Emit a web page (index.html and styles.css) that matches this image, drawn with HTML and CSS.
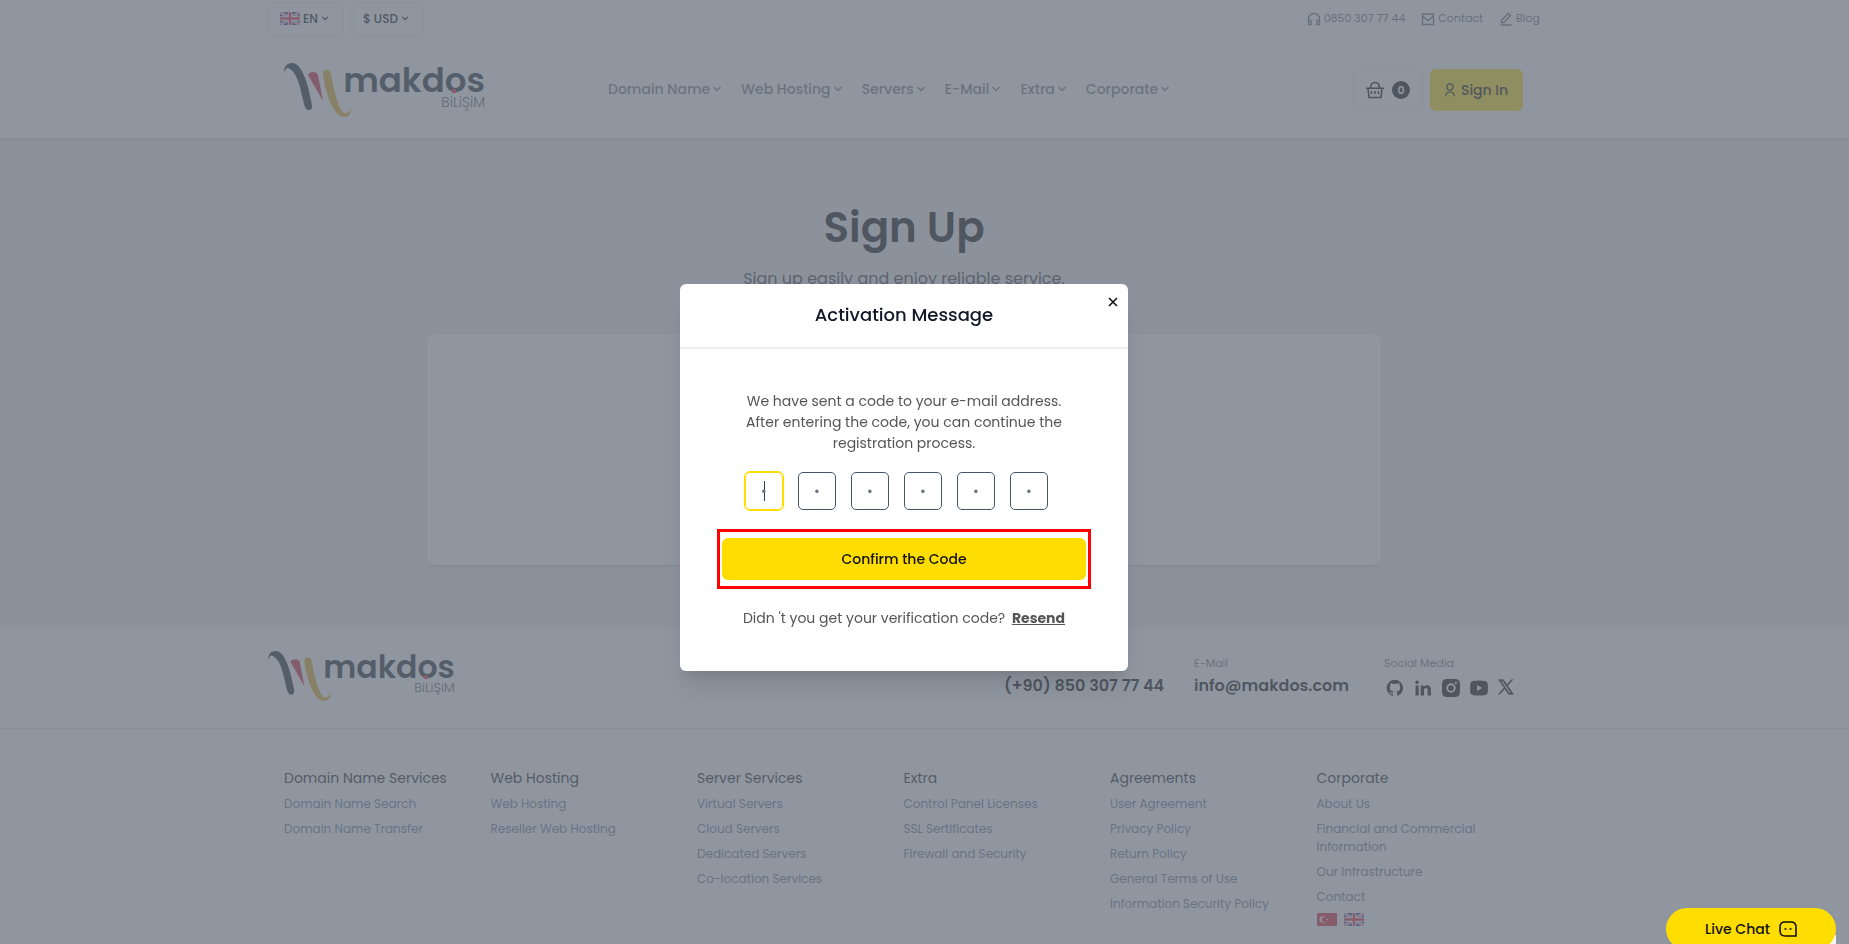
FILE: index.html
```html
<!DOCTYPE html>
<html lang="en">
<head>
    <meta charset="UTF-8">
    <meta name="viewport" content="width=device-width, initial-scale=1.0">
    <title>Sign Up - Makdos</title>
    <link rel="stylesheet" href="styles.css">
</head>
<body>
    <!-- Shared icons -->
    <svg class="sprite" aria-hidden="true">
        <symbol id="chevron" viewBox="0 0 10 6">
            <path d="M1.500 1l3.500 3.500L8.500 1" fill="none" stroke="currentColor" stroke-width="1.500"/>
        </symbol>
        <symbol id="flag-uk" viewBox="0 0 20 13">
            <rect width="20" height="13" rx="1" fill="#1c2f86"/>
            <path d="M0 0l20 13M20 0L0 13" stroke="#fff" stroke-width="3"/>
            <path d="M0 0l20 13M20 0L0 13" stroke="#e02040" stroke-width="1"/>
            <path d="M10 0v13M0 6.500h20" stroke="#fff" stroke-width="4.500"/>
            <path d="M10 0v13M0 6.500h20" stroke="#e02040" stroke-width="2.500"/>
        </symbol>
        <symbol id="flag-tr" viewBox="0 0 20 13">
            <rect width="20" height="13" rx="1" fill="#e01a28"/>
            <circle cx="6" cy="6.500" r="3.300" fill="#fff"/>
            <circle cx="7" cy="6.500" r="2.600" fill="#e01a28"/>
            <path d="M9 6.500l3-1-1.500 1 1.500 1z" fill="#fff"/>
        </symbol>
        <symbol id="logo" viewBox="0 0 201 56" overflow="visible">
            <path d="M0 11C0 4 3 1 8 1c8 0 13 13 16 24l4 18c1 6-5 7-7 2C17 32 15 10 4 6 2 6 1 8 0 11z" fill="#14222e"/>
            <path d="M24 13c1-4 9-4 10 0l5 26z" fill="#d21f32"/>
            <path d="M39 11c1-5 7-4 8 1 4 23 9 38 14 39 3 1 5-2 6-6 1 6-2 10-7 10C50 55 41 32 39 11z" fill="#e8ac1c"/>
            <text class="logo-name" x="201" y="30" text-anchor="end">makdos</text>
            <text class="logo-sub" x="201" y="45" text-anchor="end">BiLiŞiM</text>
            <path d="M168 27h4v4h-4z" fill="#e02030"/>
        </symbol>
    </svg>

    <header class="header">
        <div class="topbar">
            <div class="container topbar-inner">
                <button class="picker" type="button">
                    <svg class="flag"><use href="#flag-uk"/></svg>
                    EN
                    <svg class="chevron"><use href="#chevron"/></svg>
                </button>
                <button class="picker" type="button">
                    $ USD
                    <svg class="chevron"><use href="#chevron"/></svg>
                </button>
                <div class="top-links">
                    <a href="#">
                        <svg viewBox="0 0 14 14" fill="none" stroke="currentColor" stroke-width="1.400"><path d="M1.500 12V7a5.500 5.500 0 0 1 11 0v5M1.500 8.500H4v4H1.500zM12.500 8.500H10v4h2.500z"/></svg>
                        0850 307 77 44
                    </a>
                    <a href="#">
                        <svg viewBox="0 0 14 14" fill="none" stroke="currentColor" stroke-width="1.400"><path d="M1.500 2h11v10.500h-11zM1.500 4L7 8.500 12.500 4"/></svg>
                        Contact
                    </a>
                    <a href="#">
                        <svg viewBox="0 0 14 14" fill="none" stroke="currentColor" stroke-width="1.400"><path d="M2.500 10.500v-2.500L9.500 1.500 11.500 3.500 5 10.500zM1.500 13h11"/></svg>
                        Blog
                    </a>
                </div>
            </div>
        </div>
        <div class="container header-inner">
            <a href="#" aria-label="Makdos"><svg class="logo"><use href="#logo"/></svg></a>
            <nav class="nav">
                <a href="#">Domain Name <svg class="chevron"><use href="#chevron"/></svg></a>
                <a href="#">Web Hosting <svg class="chevron"><use href="#chevron"/></svg></a>
                <a href="#">Servers <svg class="chevron"><use href="#chevron"/></svg></a>
                <a href="#">E-Mail <svg class="chevron"><use href="#chevron"/></svg></a>
                <a href="#">Extra <svg class="chevron"><use href="#chevron"/></svg></a>
                <a href="#">Corporate <svg class="chevron"><use href="#chevron"/></svg></a>
            </nav>
            <div class="actions">
                <button class="cart" type="button" aria-label="Cart">
                    <svg viewBox="0 0 18 18" fill="none" stroke="currentColor" stroke-width="1.600"><path d="M0 7.200h18M2 7.500l1 9h12l1-9M4.500 7C4.500 3 6.500 1.500 9 1.500S13.500 3 13.500 7M5.500 10v3M9 10v3M12.500 10v3"/></svg>
                    <span class="cart-count">0</span>
                </button>
                <button class="sign-in" type="button">
                    <svg viewBox="0 0 10 14" fill="none" stroke="currentColor" stroke-width="1.200"><circle cx="5" cy="4" r="3.200"/><path d="M.7 13.500c0-3 1.500-4.500 4.300-4.500s4.300 1.500 4.300 4.500"/></svg>
                    Sign In
                </button>
            </div>
        </div>
    </header>

    <main class="main">
        <h1>Sign Up</h1>
        <p class="lead">Sign up easily and enjoy reliable service.</p>
        <div class="card"></div>
    </main>

    <footer class="footer">
        <div class="footer-top">
            <div class="container footer-top-inner">
                <a href="#" aria-label="Makdos"><svg class="logo logo-small"><use href="#logo"/></svg></a>
                <div class="contacts">
                    <div>
                        <span class="label">Phone</span>
                        <a class="value" href="#">(+90) 850 307 77 44</a>
                    </div>
                    <div>
                        <span class="label">E-Mail</span>
                        <a class="value" href="#">info@makdos.com</a>
                    </div>
                    <div>
                        <span class="label">Social Media</span>
                        <div class="social">
                            <a href="#" aria-label="GitHub"><svg viewBox="0 0 24 24"><path d="M12 1A11 11 0 0 0 8.500 22.500c.6.1.8-.3.800-.6v-2c-3 .7-3.700-1.400-3.700-1.400-.5-1.300-1.200-1.600-1.200-1.600-1-.7.1-.7.1-.7 1.100.1 1.700 1.100 1.700 1.100 1 1.700 2.600 1.200 3.200.9.1-.7.4-1.200.7-1.500-2.400-.3-5-1.200-5-5.400 0-1.200.4-2.200 1.100-2.900-.1-.3-.5-1.400.1-2.900 0 0 .9-.3 3 1.100a10.500 10.500 0 0 1 5.500 0c2.100-1.400 3-1.100 3-1.100.6 1.500.2 2.600.1 2.900.7.8 1.100 1.700 1.100 2.900 0 4.200-2.600 5.100-5 5.400.4.300.7 1 .7 2v3c0 .3.200.7.8.6A11 11 0 0 0 12 1z"/></svg></a>
                            <a href="#" aria-label="LinkedIn"><svg viewBox="0 0 24 24"><path d="M2 8.500h4.300V22H2zM4.100 2a2.400 2.400 0 1 1 0 4.800 2.400 2.400 0 0 1 0-4.800zM9 8.500h4v2c.7-1.300 2.200-2.300 4.300-2.300 4.200 0 5.200 2.700 5.200 6.400V22h-4.300v-6.600c0-1.600 0-3.500-2.200-3.500s-2.600 1.700-2.600 3.400V22H9z"/></svg></a>
                            <a href="#" aria-label="Instagram"><svg viewBox="0 0 24 24"><path fill-rule="evenodd" d="M7 0h10q7 0 7 7v10q0 7-7 7H7q-7 0-7-7V7q0-7 7-7zm5 5.800a6.200 6.200 0 1 0 0 12.400 6.200 6.200 0 0 0 0-12.400zm0 2.400a3.800 3.800 0 1 1 0 7.600 3.800 3.800 0 0 1 0-7.600zM18.500 4a1.500 1.500 0 1 0 0 3 1.500 1.500 0 0 0 0-3z"/></svg></a>
                            <a href="#" aria-label="YouTube"><svg viewBox="0 0 24 24"><path fill-rule="evenodd" d="M5 2.500q7-.7 14 0 4.500.3 4.700 4.500.4 5 0 10-.2 4.200-4.700 4.500-7 .7-14 0Q.5 21.200.3 17q-.4-5 0-10Q.5 2.800 5 2.500zM9.500 8v8l7-4z"/></svg></a>
                            <a class="social-x" href="#" aria-label="X"><svg viewBox="0 0 24 24"><path fill-rule="evenodd" stroke="#000" d="M1 1h7l5.500 7.700L20.200 1h2l-7.800 9L23 23h-7l-6-8.500L2.800 23h-2L9.200 13.200zm2.900 1.500L17 21.500h3L7 2.500z"/></svg></a>
                        </div>
                    </div>
                </div>
            </div>
        </div>
        <div class="container footer-cols">
            <div class="col">
                <h2>Domain Name Services</h2>
                <a href="#">Domain Name Search</a>
                <a href="#">Domain Name Transfer</a>
            </div>
            <div class="col">
                <h2>Web Hosting</h2>
                <a href="#">Web Hosting</a>
                <a href="#">Reseller Web Hosting</a>
            </div>
            <div class="col">
                <h2>Server Services</h2>
                <a href="#">Virtual Servers</a>
                <a href="#">Cloud Servers</a>
                <a href="#">Dedicated Servers</a>
                <a href="#">Co-location Services</a>
            </div>
            <div class="col">
                <h2>Extra</h2>
                <a href="#">Control Panel Licenses</a>
                <a href="#">SSL Sertificates</a>
                <a href="#">Firewall and Security</a>
            </div>
            <div class="col">
                <h2>Agreements</h2>
                <a href="#">User Agreement</a>
                <a href="#">Privacy Policy</a>
                <a href="#">Return Policy</a>
                <a href="#">General Terms of Use</a>
                <a href="#">Information Security Policy</a>
            </div>
            <div class="col">
                <h2>Corporate</h2>
                <a href="#">About Us</a>
                <a href="#">Financial and Commercial Information</a>
                <a href="#">Our Infrastructure</a>
                <a href="#">Contact</a>
                <div class="flags">
                    <svg class="flag"><use href="#flag-tr"/></svg>
                    <svg class="flag"><use href="#flag-uk"/></svg>
                </div>
            </div>
        </div>
    </footer>

    <!-- Activation modal -->
    <div class="overlay">
        <form class="modal" role="dialog" aria-labelledby="modalTitle">
            <div class="modal-header">
                <h3 id="modalTitle">Activation Message</h3>
                <button class="close" type="button" aria-label="Close">
                    <svg viewBox="0 0 10 10" fill="none" stroke="currentColor" stroke-width="1.600"><path d="M1 1l8 8M9 1L1 9"/></svg>
                </button>
            </div>
            <div class="modal-body">
                <p class="message">We have sent a code to your e-mail address. After entering the code, you can continue the registration process.</p>
                <div class="code">
                    <input class="active" type="text" maxlength="1" placeholder="•" aria-label="Digit 1">
                    <input type="text" maxlength="1" placeholder="•" aria-label="Digit 2">
                    <input type="text" maxlength="1" placeholder="•" aria-label="Digit 3">
                    <input type="text" maxlength="1" placeholder="•" aria-label="Digit 4">
                    <input type="text" maxlength="1" placeholder="•" aria-label="Digit 5">
                    <input type="text" maxlength="1" placeholder="•" aria-label="Digit 6">
                </div>
                <div class="highlight">
                    <button class="confirm" type="button">Confirm the Code</button>
                </div>
                <p class="resend">Didn 't you get your verification code? <a href="#">Resend</a></p>
            </div>
        </form>
    </div>

    <div class="chat">
        <button type="button">
            Live Chat
            <svg viewBox="0 0 18 16" fill="none" stroke="currentColor" stroke-width="1.600"><path d="M6 1h6q5 0 5 5v9H6q-5 0-5-5V6q0-5 5-5z"/><path d="M5.500 8h2M10.500 8h2"/></svg>
        </button>
    </div>
</body>
</html>
```

FILE: styles.css
```css
* {
    box-sizing: border-box;
}
body {
    margin: 0;
    height: 100vh;
    overflow: hidden;
    background-color: #fff;
    color: #000;
    font-family: Poppins, Inter, "Open Sans", sans-serif;
    font-size: 14px;
}
h1, h2, h3, p {
    margin: 0;
}
a {
    color: inherit;
    text-decoration: none;
}
button {
    font: inherit;
    color: inherit;
    background: none;
    border: none;
    padding: 0;
    cursor: pointer;
}
svg {
    display: block;
    flex: none;
}
.sprite {
    position: absolute;
    width: 0;
    height: 0;
}
.header, .main, .footer {
    padding-right: 41px;
}
.container {
    max-width: 1272px;
    margin: 0 auto;
}
.flag {
    width: 20px;
    height: 13px;
}
.chevron {
    width: 10px;
    height: 6px;
}

/* Logo */
.logo {
    width: 201px;
    height: 56px;
    overflow: visible;
}
.logo-small {
    width: 187px;
    height: 52px;
}
.logo-name {
    font-size: 34px;
    font-weight: 600;
    fill: #14222e;
}
.logo-sub {
    font-size: 14px;
    font-weight: 300;
    fill: #4a5560;
}

/* Header */
.header {
    position: relative;
    background-color: #fff;
    box-shadow: 0 2px 4px rgba(0, 0, 0, 0.12);
}
.topbar {
    margin-right: -41px;
    padding: 2px 41px 4px 0;
    border-bottom: 1px solid #f0f0f2;
}
.topbar-inner {
    display: flex;
    gap: 7px;
}
.picker {
    display: flex;
    align-items: center;
    gap: 3px;
    height: 35px;
    padding: 0 13px 2px 10px;
    border: 2px solid #f0f1f4;
    border-radius: 6px;
    font-size: 12px;
    font-weight: 500;
}
.picker .chevron {
    width: 8px;
    height: 5px;
}
.top-links {
    display: flex;
    align-items: center;
    gap: 16px;
    height: 33px;
    margin-left: auto;
    color: #5b6478;
    font-size: 11px;
}
.top-links a {
    display: flex;
    align-items: center;
    gap: 3px;
}
.top-links svg {
    width: 14px;
    height: 14px;
}
.header-inner {
    display: flex;
    align-items: center;
    height: 96px;
    padding: 0 17px 0 16px;
}
.nav {
    display: flex;
    gap: 19px;
    margin-left: 123px;
    padding-bottom: 2px;
    color: #6b7280;
    font-weight: 500;
}
.nav a {
    display: flex;
    align-items: center;
    gap: 2px;
}
.actions {
    display: flex;
    gap: 7px;
    margin-left: auto;
}
.cart, .sign-in {
    display: flex;
    align-items: center;
    justify-content: center;
    height: 42px;
    border-radius: 6px;
}
.cart {
    gap: 8px;
    width: 70px;
    border: 2px solid #f0f1f4;
}
.cart svg {
    width: 18px;
    height: 18px;
}
.cart-count {
    width: 18px;
    height: 18px;
    border-radius: 50%;
    background-color: #000;
    color: #fff;
    font-size: 11px;
    font-weight: 600;
    line-height: 18px;
}
.sign-in {
    gap: 6px;
    width: 93px;
    background-color: #ffdd00;
    font-weight: 500;
}
.sign-in svg {
    width: 10px;
    height: 14px;
}

/* Page content */
.main {
    padding-top: 60px;
    padding-bottom: 64px;
    background-color: #edeff0;
    text-align: center;
}
h1 {
    font-size: 42px;
    font-weight: 600;
    line-height: 60px;
}
.lead {
    margin-top: 9px;
    color: #333;
    font-size: 16px;
    line-height: 24px;
}
.card {
    max-width: 954px;
    height: 231px;
    margin: 43px auto 0;
    border-radius: 6px;
    background-color: #fff;
    box-shadow: 0 1px 3px rgba(0, 0, 0, 0.2);
}

/* Footer */
.footer-top {
    margin-right: -41px;
    padding: 21px 41px 0 0;
    height: 100px;
    border-bottom: 1px solid #e5e7eb;
}
.footer-top-inner {
    display: flex;
    justify-content: space-between;
}
.contacts {
    display: grid;
    grid-template-columns: 190px 190px 156px;
    padding-top: 5px;
}
.label {
    display: block;
    color: #6b7280;
    font-size: 11px;
    line-height: 16px;
}
.value {
    font-size: 16px;
    font-weight: 600;
    line-height: 30px;
    white-space: nowrap;
}
.social {
    display: flex;
    gap: 10px;
    padding: 8px 2px;
}
.social svg {
    width: 18px;
    height: 18px;
    fill: #000;
}
.social .social-x svg {
    width: 16px;
    height: 16px;
}
.footer-cols {
    display: grid;
    grid-template-columns: repeat(6, 1fr);
    padding: 39px 17px 39px 16px;
}
.col {
    display: flex;
    flex-direction: column;
    gap: 7px;
    padding-right: 30px;
    color: #64748b;
    font-size: 12px;
    line-height: 18px;
}
.col h2 {
    margin-right: -30px;
    color: #111;
    font-size: 14px;
    font-weight: 400;
    line-height: 20px;
}
.flags {
    display: flex;
    gap: 7px;
}

/* Activation modal */
.overlay {
    position: fixed;
    inset: 0;
    display: flex;
    align-items: center;
    justify-content: center;
    padding: 11px 41px 0 0;
    background-color: rgba(106, 115, 128, 0.75);
}
.modal {
    width: 448px;
    border-radius: 6px;
    background-color: #fff;
    box-shadow: 0 20px 25px -5px rgba(0, 0, 0, 0.1), 0 8px 10px -6px rgba(0, 0, 0, 0.1);
    color: #555;
    text-align: center;
}
.modal-header {
    position: relative;
    padding: 17px 0 19px;
    border-bottom: 2px solid #eee;
}
.modal-header h3 {
    color: #111827;
    font-size: 18px;
    font-weight: 500;
    line-height: 27px;
}
.close {
    position: absolute;
    top: 13px;
    right: 10px;
    color: #111;
}
.close svg {
    width: 10px;
    height: 10px;
}
.modal-body {
    padding: 42px 37px;
}
.message {
    padding: 0 20px;
    line-height: 21px;
}
.code {
    display: flex;
    gap: 15px;
    padding: 18px 28px 19px;
}
.code input {
    width: 38px;
    height: 38px;
    padding: 0;
    border: 1px solid #475569;
    border-radius: 5px;
    font: inherit;
    text-align: center;
}
.code input::placeholder {
    color: #6b7280;
}
.code .active {
    border-color: #ffdd00;
    outline: 1px solid #ffdd00;
    background: linear-gradient(#334155, #334155) center / 1px 20px no-repeat;
}
.highlight {
    padding: 6px 2px;
    border: 3px solid #f00;
}
.confirm {
    display: block;
    width: 100%;
    height: 42px;
    border-radius: 6px;
    background-color: #ffdd00;
    color: #111;
    font-weight: 500;
}
.resend {
    margin-top: 19px;
    line-height: 21px;
}
.resend a {
    margin-left: 3px;
    font-weight: 700;
    text-decoration: underline;
}

/* Live chat */
.chat {
    position: fixed;
    right: 13px;
    bottom: -6px;
    background: linear-gradient(#f5f5f5, #f5f5f5) bottom right / 10px 15px no-repeat;
}
.chat button {
    display: flex;
    align-items: center;
    justify-content: center;
    gap: 9px;
    width: 170px;
    height: 42px;
    border-radius: 21px;
    background-color: #ffdd00;
    color: #111;
    font-weight: 500;
}
.chat svg {
    width: 18px;
    height: 16px;
}
```
